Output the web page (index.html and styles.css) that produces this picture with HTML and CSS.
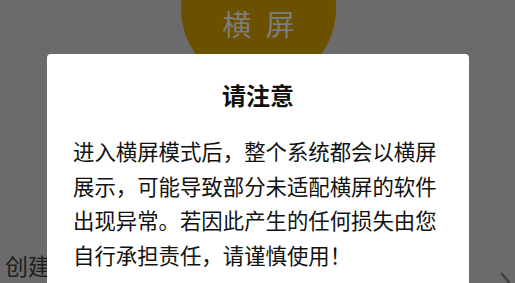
FILE: index.html
```html
<!DOCTYPE html>
<html lang="zh">
<head>
<meta charset="utf-8">
<link rel="stylesheet" href="styles.css">
</head>
<body>
<div class="page">
  <div class="hero">
    <div class="circle"><span class="circle-text">横 屏</span></div>
  </div>
  <div class="list">
    <div class="row">
      <span class="row-label">创建</span>
      <svg class="chevron" width="12" height="22" viewBox="0 0 12 22"><path d="M2 2 L10 11 L2 20" fill="none" stroke="#3c3c3c" stroke-width="2"/></svg>
    </div>
  </div>
</div>
<div class="dialog">
  <div class="dialog-title">请注意</div>
  <p class="dialog-body">进入横屏模式后，整个系统都会以横屏展示，可能导致部分未适配横屏的软件出现异常。若因此产生的任何损失由您自行承担责任，请谨慎使用！</p>
</div>
</body>
</html>
```

FILE: styles.css
```css
html, body {
  margin: 0;
  padding: 0;
  width: 515px;
  height: 283px;
  overflow: hidden;
  background: #6b6b6b;
  font-family: "Noto Sans CJK SC", "Noto Sans", sans-serif;
}
.page {
  display: flex;
  flex-direction: column;
  height: 283px;
  overflow: hidden;
}
.hero {
  height: 232px;
  flex-shrink: 0;
  display: flex;
  justify-content: center;
}
.circle {
  width: 155px;
  height: 155px;
  border-radius: 50%;
  background: #6b5000;
  margin-top: -69px;
  margin-left: 2px;
  display: flex;
  justify-content: center;
  align-items: flex-start;
}
.circle-text {
  margin-top: 72px;
  font-size: 29px;
  line-height: 40px;
  color: #7d7d7d;
  letter-spacing: 4px;
  margin-left: 4px;
}
.list {
  border-top: 1px solid #686868;
  flex: 1;
  overflow: hidden;
}
.row {
  display: flex;
  align-items: flex-start;
  justify-content: space-between;
  padding: 16px 4px 0 5px;
}
.row-label {
  font-size: 23px;
  line-height: 32px;
  color: #1e1e1e;
}
.chevron {
  margin-top: 22px;
  flex-shrink: 0;
}
.dialog {
  position: absolute;
  left: 47px;
  top: 54px;
  width: 422px;
  height: 229px;
  background: #ffffff;
  border-radius: 4px 4px 0 0;
  box-sizing: border-box;
  padding: 24px 30px 0 26px;
}
.dialog-title {
  text-align: center;
  font-size: 24px;
  font-weight: bold;
  line-height: 34px;
  color: #111111;
  margin-left: 4px;
}
.dialog-body {
  margin: 22px 0 0 0;
  font-size: 21.4px;
  line-height: 34.6px;
  color: #111111;
}
```
